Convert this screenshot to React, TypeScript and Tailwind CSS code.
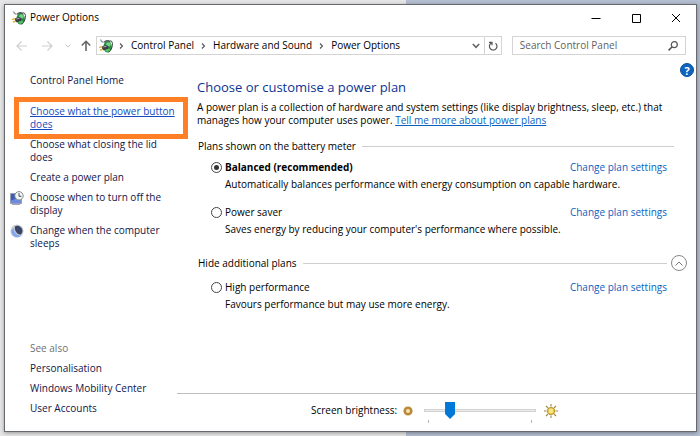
import { useState } from "react";
import type { ReactNode } from "react";

const plans = [
  {
    id: "balanced",
    name: "Balanced (recommended)",
    description:
      "Automatically balances performance with energy consumption on capable hardware.",
  },
  {
    id: "saver",
    name: "Power saver",
    description:
      "Saves energy by reducing your computer's performance where possible.",
  },
  {
    id: "high",
    name: "High performance",
    description: "Favours performance but may use more energy.",
  },
];

function PowerIcon() {
  return (
    <svg viewBox="0 0 14 14" className="size-3.5 shrink-0" aria-hidden="true">
      <ellipse cx="8.6" cy="7.8" rx="4.2" ry="5.8" fill="#2b8a41" />
      <ellipse cx="9.4" cy="5.4" rx="2.4" ry="2.2" fill="#6fd680" />
      <ellipse cx="9" cy="11.200" rx="2.400" ry="1.600" fill="#56c268" />
      <path d="M4.600 3c2-2.400 5-2.600 7.200-.8l-.8 1.400c-2-1-3.800-1-5.400.2z" fill="#55645d" />
      <path d="M11.500 1.500c2.400.8 2.400 4.500 1.200 7.500-.6 1.800-1.800 3.400-3.400 4" fill="none" stroke="#33443a" strokeWidth="1" />
      <path d="M1.600.4c.2 1.800 1.200 2.600 3 2.800" fill="none" stroke="#8693a3" strokeWidth="1.100" />
      <path d="M3.200 7.200 7.600 6l2 1.400-.4 2.400-4.800 1.400L3 9.600z" fill="#3a3d44" />
      <path d="m4.400 8 3.200-.8" stroke="#b4b8be" strokeWidth=".9" />
      <path d="M.2 8.400 3 7.800M.8 11.200l2.800-.8" stroke="#dba923" strokeWidth="1.300" />
    </svg>
  );
}

function DisplayIcon() {
  return (
    <svg viewBox="0 0 14 14" className="size-3.5" aria-hidden="true">
      <path d="M.5 2.500h11v10H.5z" fill="#3e5bb8" stroke="#98a0b8" />
      <path d="M1 9.500 11 6v6H1z" fill="#6d8be0" />
      <path d="M2 13.500h8" stroke="#a3a7b5" />
      <circle cx="9" cy="4.800" r="4.200" fill="#f3f5f1" stroke="#828b8c" />
      <path d="M9 2.200V5.300h2.400" fill="none" stroke="#3d4f5e" />
    </svg>
  );
}

function SleepIcon() {
  return (
    <svg viewBox="0 0 14 14" className="size-3.5" aria-hidden="true">
      <circle cx="7" cy="7" r="6.600" fill="#ccd1da" />
      <path d="M1.500 6a6 6 0 0 0 10 5.500C8 12 4 9.500 3.600 4Z" fill="#84a5ea" />
      <path d="M4.800 2.400C8 .8 12.300 3 12.500 7c0 1.600-.8 2.800-1.800 3.600C7 10.500 4.400 7 4.800 2.400z" fill="#3b4568" />
    </svg>
  );
}

function Chevron() {
  return (
    <svg viewBox="0 0 5 8" className="h-2 w-[5px] shrink-0" aria-hidden="true">
      <path d="m1 1.500 2.500 2.500L1 6.500" fill="none" stroke="#555" strokeWidth="1.1" />
    </svg>
  );
}

function SideLink({ children, icon }: { children: ReactNode; icon?: ReactNode }) {
  return (
    <a href="#" className="flex text-[#10154a]">
      <span className="w-[22px] shrink-0 pl-0.5">{icon}</span>
      <span>{children}</span>
    </a>
  );
}

function GroupTitle({ children, action }: { children: ReactNode; action?: ReactNode }) {
  return (
    <div className="flex h-4 items-center">
      <h2 className="ml-px shrink-0">{children}</h2>
      <div className="ml-1.5 h-px flex-1 bg-[#cfcfcf]" />
      {action}
    </div>
  );
}

function Plan({
  plan,
  checked,
  onSelect,
}: {
  plan: (typeof plans)[number];
  checked: boolean;
  onSelect: () => void;
}) {
  return (
    <div className="pl-3.5">
      <div className="flex items-center">
        <input
          type="radio"
          name="plan"
          id={plan.id}
          checked={checked}
          onChange={onSelect}
          className="mr-[3px] size-[11px] shrink-0 appearance-none rounded-full border border-[#444] bg-white bg-clip-content p-[2px] checked:bg-[#333]"
        />
        <label htmlFor={plan.id} className={checked ? "font-bold" : ""}>
          {plan.name}
        </label>
        <a href="#" className="mr-5 ml-auto text-[#0a5fc2]">
          Change plan settings
        </a>
      </div>
      <p className="mt-1 pl-3.5">{plan.description}</p>
    </div>
  );
}

export default function App() {
  const [selected, setSelected] = useState("balanced");
  const [expanded, setExpanded] = useState(true);
  const [brightness, setBrightness] = useState(20);

  return (
    <div className="flex min-h-screen bg-[linear-gradient(to_right,#e6e6e6_58%,#b3bed1_58%)] pt-1 pr-[3px] pb-1 pl-1 font-['Open_Sans','Noto_Sans',sans-serif] text-[10px] leading-[13px] text-black">
      <div className="flex flex-1 flex-col border border-[#66696e] bg-white shadow-[0_1px_4px_rgba(0,0,0,0.35)]">
        <header className="flex h-[25px] items-center pl-[7px]">
          <PowerIcon />
          <h1 className="ml-1">Power Options</h1>
          <div className="mr-[15px] ml-auto flex items-center gap-[30px]">
            <button aria-label="Minimise">
              <svg viewBox="0 0 10 10" className="size-2.5">
                <path d="M.5 5.500h9" stroke="currentColor" />
              </svg>
            </button>
            <button aria-label="Maximise">
              <svg viewBox="0 0 10 10" className="size-2.5">
                <path d="M1.500 1.500h8v8h-8z" fill="none" stroke="currentColor" />
              </svg>
            </button>
            <button aria-label="Close">
              <svg viewBox="0 0 10 10" className="size-2.5">
                <path d="m1 1 8 8m0-8L1 9" stroke="currentColor" />
              </svg>
            </button>
          </div>
        </header>

        <nav className="mt-1.5 flex h-[19px] items-stretch pr-2.5 pl-[11px]">
          <div className="flex w-20 items-center">
            <button aria-label="Back">
              <svg viewBox="0 0 11 10" className="h-2.5 w-[11px]" fill="none" stroke="#cfcfcf" strokeWidth="1.2">
                <path d="M11 5H1m4.500-4.500L1 5l4.500 4.500" />
              </svg>
            </button>
            <button aria-label="Forward" className="ml-[15px]">
              <svg viewBox="0 0 11 10" className="h-2.5 w-[11px]" fill="none" stroke="#cfcfcf" strokeWidth="1.2">
                <path d="M0 5h10M5.500.5 10 5l-4.500 4.500" />
              </svg>
            </button>
            <button aria-label="Recent locations" className="ml-3">
              <svg viewBox="0 0 6 4" className="h-1 w-1.5" fill="none" stroke="#c4c4c4">
                <path d="m.5.5 2.500 2.500L5.500.5" />
              </svg>
            </button>
            <button aria-label="Up" className="ml-2.5">
              <svg viewBox="0 0 10 11" className="h-[11px] w-2.5" fill="none" stroke="#666" strokeWidth="1.6">
                <path d="M5 11V1.500M.8 5.500 5 1.300l4.200 4.200" />
              </svg>
            </button>
          </div>
          <div className="flex flex-1 items-stretch border border-[#d4d4d4]">
            <div className="flex flex-1 items-center pl-0.5">
              <PowerIcon />
              <span className="ml-1.5 flex items-center gap-[7px]">
                <Chevron />
                <a href="#">Control Panel</a>
                <Chevron />
                <a href="#">Hardware and Sound</a>
                <Chevron />
                <a href="#">Power Options</a>
              </span>
            </div>
            <button aria-label="Previous locations" className="px-1">
              <svg viewBox="0 0 8 6" className="h-1.5 w-2" fill="none" stroke="#666" strokeWidth="1.6">
                <path d="m.8 1 3.200 3.400L7.200 1" />
              </svg>
            </button>
            <button aria-label="Refresh" className="border-l border-[#d4d4d4] px-[3px]">
              <svg viewBox="0 0 10 10" className="size-2.5" fill="none" stroke="#555" strokeWidth="1.2">
                <path d="M7.500 2.200A3.800 3.800 0 1 1 3.200 2M1 1.300h3v3" />
              </svg>
            </button>
          </div>
          <div className="ml-2.5 flex w-[26%] items-center border border-[#d4d4d4] px-[7px]">
            <input
              type="search"
              aria-label="Search Control Panel"
              placeholder="Search Control Panel"
              className="min-w-0 flex-1 outline-none placeholder:text-[#5f5f5f]"
            />
            <svg viewBox="0 0 10 10" className="size-2.5 shrink-0" fill="none" stroke="#555">
              <circle cx="6.300" cy="3.700" r="3" strokeWidth="1.200" />
              <path d="M4.200 5.800.6 9.400" strokeWidth="1.600" />
            </svg>
          </div>
        </nav>

        <div className="relative flex flex-1">
          <button
            aria-label="Help"
            className="absolute top-2 right-0.5 flex size-3.5 items-center justify-center rounded-full border border-[#0a4f9c] bg-[#0d63be] text-[11px] font-bold text-white"
          >
            ?
          </button>

          <aside className="flex w-[172px] shrink-0 flex-col pt-[19px] pb-4 pl-[3px]">
            <SideLink>Control Panel Home</SideLink>
            <div className="mt-[18px] flex flex-col gap-[7px]">
              <div className="relative">
                <a href="#" className="block pl-[22px] text-[#1549c0] underline">
                  Choose what the power button does
                </a>
                <div className="pointer-events-none absolute -inset-y-2 -right-[11px] left-1.5 border-[5px] border-[#ff7f27]" />
              </div>
              <SideLink>Choose what closing the lid does</SideLink>
              <SideLink>Create a power plan</SideLink>
              <SideLink icon={<DisplayIcon />}>Choose when to turn off the display</SideLink>
              <SideLink icon={<SleepIcon />}>Change when the computer sleeps</SideLink>
            </div>
            <div className="mt-auto flex flex-col gap-[7px]">
              <h2 className="pl-[22px] text-[#707070]">See also</h2>
              <SideLink>Personalisation</SideLink>
              <SideLink>Windows Mobility Center</SideLink>
              <SideLink>User Accounts</SideLink>
            </div>
          </aside>

          <div className="flex min-w-0 flex-1 flex-col">
            <main className="flex-1 pt-[22px] pr-[9px] pl-5">
              <h2 className="text-[13px] leading-5 text-[#0c3391]">
                Choose or customise a power plan
              </h2>
              <p className="mt-1 max-w-[480px]">
                A power plan is a collection of hardware and system settings (like display
                brightness, sleep, etc.) that manages how your computer uses power.{" "}
                <a href="#" className="text-[#0a5fc2] underline">
                  Tell me more about power plans
                </a>
              </p>
              <div className="mt-[11px] pr-[13px]">
                <GroupTitle>Plans shown on the battery meter</GroupTitle>
              </div>
              <div className="mt-[7px] flex flex-col gap-[15px]">
                {plans.slice(0, 2).map((plan) => (
                  <Plan
                    key={plan.id}
                    plan={plan}
                    checked={selected === plan.id}
                    onSelect={() => setSelected(plan.id)}
                  />
                ))}
              </div>
              <div className="mt-[19px]">
                <GroupTitle
                  action={
                    <button
                      aria-label="Toggle additional plans"
                      onClick={() => setExpanded(!expanded)}
                      className="ml-1 flex size-4 items-center justify-center rounded-full border border-[#888]"
                    >
                      <svg viewBox="0 0 8 5" className="h-[5px] w-2" fill="none" stroke="#777">
                        <path d="M.5 4.500 4 1l3.500 3.500" />
                      </svg>
                    </button>
                  }
                >
                  Hide additional plans
                </GroupTitle>
              </div>
              {expanded && (
                <div className="mt-2.5">
                  <Plan
                    plan={plans[2]}
                    checked={selected === "high"}
                    onSelect={() => setSelected("high")}
                  />
                </div>
              )}
            </main>

            <footer className="flex h-[38px] items-center justify-center border-t border-[#bdbdbd] pr-1 pb-1">
              <label htmlFor="brightness">Screen brightness:</label>
              <svg viewBox="0 0 10 10" className="ml-1.5 size-2.5" aria-hidden="true">
                <circle cx="5" cy="5" r="3.300" fill="#f6e3ae" stroke="#b98a3c" strokeWidth="2.600" />
              </svg>
              <div className="relative ml-[11px] flex w-28 items-center">
                <input
                  id="brightness"
                  type="range"
                  value={brightness}
                  onChange={(e) => setBrightness(Number(e.target.value))}
                  className="h-[17px] w-full appearance-none bg-transparent [&::-webkit-slider-runnable-track]:h-[3px] [&::-webkit-slider-runnable-track]:border [&::-webkit-slider-runnable-track]:border-[#d2d2d2] [&::-webkit-slider-runnable-track]:bg-[#ececec] [&::-webkit-slider-thumb]:-mt-2 [&::-webkit-slider-thumb]:h-[17px] [&::-webkit-slider-thumb]:w-2.5 [&::-webkit-slider-thumb]:appearance-none [&::-webkit-slider-thumb]:bg-[#0078d7] [&::-webkit-slider-thumb]:[clip-path:polygon(0_0,100%_0,100%_70%,50%_100%,0_70%)]"
                />
                <div className="absolute inset-x-1 -bottom-1 flex justify-between">
                  <span className="h-[3px] w-px bg-[#b5b5b5]" />
                  <span className="h-[3px] w-px bg-[#b5b5b5]" />
                </div>
              </div>
              <svg viewBox="0 0 14 14" className="ml-2 size-3.5" aria-hidden="true">
                <path
                  d="M7 0v14M0 7h14M2 2l10 10M12 2 2 12"
                  stroke="#9b8746"
                  strokeWidth="1.100"
                />
                <circle cx="7" cy="7" r="4.500" fill="#fff" />
                <circle cx="7" cy="7" r="3.400" fill="#f8e678" stroke="#c19a35" strokeWidth="1.400" />
              </svg>
            </footer>
          </div>
        </div>
      </div>
    </div>
  );
}
